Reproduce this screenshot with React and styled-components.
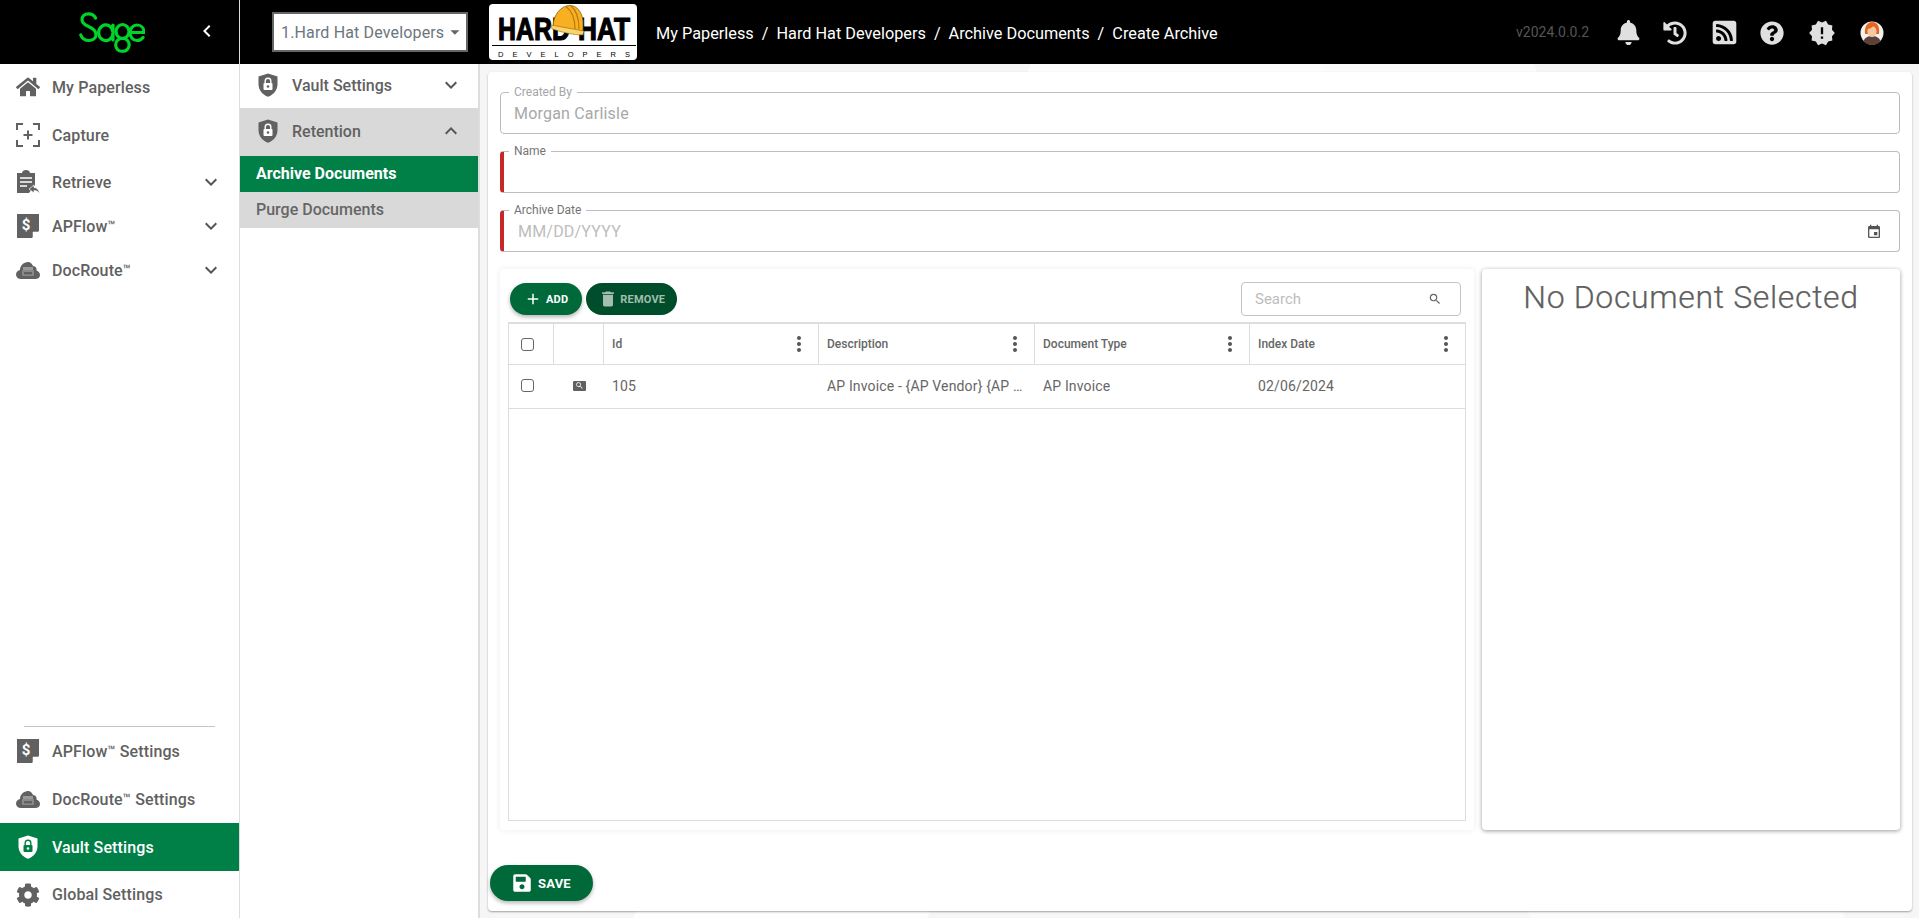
import React from 'react';
import styled, { createGlobalStyle } from 'styled-components';
import { FaBell, FaHistory, FaRssSquare, FaQuestionCircle, FaHome, FaCog, FaSave } from 'react-icons/fa';
import { MdNewReleases, MdAdd, MdDelete, MdEvent, MdSearch, MdMoreVert, MdKeyboardArrowDown, MdKeyboardArrowUp, MdKeyboardArrowLeft, MdArrowDropDown } from 'react-icons/md';

const GlobalStyle = createGlobalStyle`
  html, body {
    margin: 0;
    height: 100%;
    overflow: hidden;
    font-family: Roboto, 'Liberation Sans', sans-serif;
  }
  * { box-sizing: border-box; }
`;

const Page = styled.div`
  width: 1919px;
  height: 918px;
  display: flex;
  flex-direction: column;
  background: #fff;
`;

const Header = styled.header`
  height: 64px;
  flex: none;
  background: #000;
  display: flex;
  align-items: center;
`;

const Brand = styled.div`
  width: 240px;
  height: 100%;
  flex: none;
  border-right: 1px solid #ddd;
  display: flex;
  align-items: center;
  padding-left: 79px;
  color: #fff;
  svg.back { margin-left: 50px; margin-top: -3px; }
`;

const CompanySelect = styled.div`
  width: 196px;
  height: 40px;
  margin-left: 32px;
  flex: none;
  background: #fff;
  border: 2px solid #666;
  display: flex;
  align-items: center;
  justify-content: space-between;
  padding: 0 0 0 7px;
  color: #6c757d;
  font-size: 16px;
  letter-spacing: 0.15px;
  white-space: nowrap;
`;

const LogoBox = styled.div`
  width: 148px;
  height: 56px;
  margin-left: 21px;
  flex: none;
  background: #fff;
  border-radius: 4px;
  line-height: 0;
`;

const Breadcrumb = styled.nav`
  margin-left: 19px;
  margin-top: 2px;
  color: #fff;
  font-size: 16.3px;
  display: flex;
  gap: 8px;
  white-space: nowrap;
`;

const Version = styled.span`
  margin-left: auto;
  margin-right: 15px;
  color: #555;
  font-size: 14px;
`;

const HeaderIcons = styled.div`
  display: grid;
  grid-template-columns: 48px 46px 52px 44px 56px 44px;
  justify-items: center;
  align-items: center;
  margin-right: 25px;
  margin-top: 1px;
  color: #e0e0e0;
`;

const Body = styled.div`
  flex: 1;
  display: flex;
  min-height: 0;
`;

const Sidebar = styled.aside`
  width: 240px;
  flex: none;
  border-right: 1px solid #ddd;
  display: flex;
  flex-direction: column;
  justify-content: space-between;
`;

const Divider = styled.div`
  height: 1px;
  background: #c4c4c4;
  margin: 0 24px 0 24px;
`;

const NavRow = styled.div`
  height: ${(p) => p.$h || 48}px;
  display: flex;
  align-items: center;
  padding: 0 16px;
  gap: 12px;
  font-size: 16px;
  font-weight: 500;
  letter-spacing: 0.12px;
  color: ${(p) => (p.$active ? '#fff' : '#616161')};
  background: ${(p) => (p.$active ? '#008047' : 'transparent')};
  sup { font-size: 13px; line-height: 0; vertical-align: 2px; }
`;

const NavIcon = styled.span`
  width: 24px;
  height: 24px;
  flex: none;
  display: flex;
  align-items: center;
  justify-content: center;
`;

const Chevron = styled.span`
  margin-left: auto;
  margin-right: 0;
  display: flex;
  color: #555;
`;

const SubNav = styled.aside`
  width: 240px;
  flex: none;
  border-right: 2px solid #ddd;
`;

const SubRow = styled.div`
  height: ${(p) => p.$h}px;
  display: flex;
  align-items: center;
  padding: 0 15px 2px 18px;
  gap: 14px;
  font-size: 16px;
  font-weight: 500;
  color: #616161;
  background: ${(p) => (p.$open ? '#d9d9d9' : '#fff')};
`;

const SubItem = styled.div`
  height: 36px;
  display: flex;
  align-items: center;
  padding: 0 0 2px 16px;
  font-size: 16px;
  font-weight: ${(p) => (p.$active ? 700 : 500)};
  color: ${(p) => (p.$active ? '#fff' : '#666')};
  background: ${(p) => (p.$active ? '#008047' : '#d9d9d9')};
`;

const Main = styled.main`
  flex: 1;
  min-width: 0;
  padding: 8px 7px 7px 8px;
  background:
    linear-gradient(115deg, transparent 30%, #fdfdfd 30%, #fdfdfd 46%, transparent 46%),
    linear-gradient(70deg, transparent 60%, #fbfbfb 60%, #fbfbfb 78%, transparent 78%),
    #f6f6f6;
`;

const Card = styled.div`
  height: 100%;
  background: #fff;
  border-radius: 4px;
  box-shadow: 0 1px 2px rgba(0, 0, 0, 0.35);
  padding: 13px 12px 10px;
  display: flex;
  flex-direction: column;
`;

const Field = styled.fieldset`
  margin: 0 0 10px;
  padding: 5px 17px 0 ${(p) => (p.$required ? 10 : 13)}px;
  height: 49px;
  min-width: 0;
  border: 1px solid #bdbdbd;
  border-left: ${(p) => (p.$required ? '4px solid #c62828' : '1px solid #bdbdbd')};
  border-radius: 4px;
  display: flex;
  align-items: flex-start;
  justify-content: space-between;
  legend {
    font-size: 12px;
    line-height: 14px;
    padding: 0 5px;
    margin-left: -5px;
    color: ${(p) => (p.$muted ? '#a6a6a6' : '#757575')};
  }
  > svg { margin-top: 2px; }
`;

const FieldValue = styled.span`
  font-size: 16px;
  letter-spacing: 0.2px;
  margin-left: ${(p) => p.$indent || 0}px;
  color: ${(p) => (p.$hint ? '#bdbdbd' : '#a8a8a8')};
`;

const Panels = styled.div`
  flex: 1;
  min-height: 0;
  display: flex;
  gap: 8px;
  margin-top: 7px;
`;

const TablePanel = styled.section`
  flex: 1;
  min-width: 0;
  background: #fff;
  border-radius: 4px;
  box-shadow: 0 0 6px rgba(0, 0, 0, 0.08);
  padding: 13px 8px 9px;
  display: flex;
  flex-direction: column;
`;

const Toolbar = styled.div`
  height: 34px;
  flex: none;
  margin-bottom: 6px;
  display: flex;
  align-items: center;
  gap: 4px;
  padding: 0 5px 0 2px;
`;

const PillButton = styled.button`
  height: ${(p) => p.$h || 32}px;
  border: none;
  border-radius: 18px;
  display: inline-flex;
  align-items: center;
  justify-content: center;
  gap: ${(p) => p.$gap || 4}px;
  padding: 0 ${(p) => p.$pad || 14}px;
  font-family: inherit;
  font-size: ${(p) => p.$size || 11}px;
  font-weight: 700;
  color: ${(p) => (p.$disabled ? '#a3bdae' : '#fff')};
  background: ${(p) => (p.$disabled ? '#004d2b' : '#00693a')};
  box-shadow: ${(p) => (p.$disabled ? 'none' : '0 2px 4px rgba(0,0,0,.3)')};
  letter-spacing: 0.2px;
`;

const SearchBox = styled.div`
  width: 220px;
  height: 34px;
  margin-left: auto;
  border: 1px solid #c4c4c4;
  border-radius: 4px;
  display: flex;
  align-items: center;
  justify-content: space-between;
  padding: 0 18px 0 13px;
  font-size: 15px;
  color: #bdbdbd;
  svg { color: #666; }
`;

const Table = styled.div`
  flex: 1;
  min-height: 0;
  border: 1px solid #ddd;
  border-top-width: 2px;
`;

const TableRow = styled.div`
  display: grid;
  grid-template-columns: 45px 50px 215px 216px 215px 1fr;
  height: ${(p) => p.$h}px;
  border-bottom: 1px solid #ddd;
`;

const HeadCell = styled.div`
  display: flex;
  align-items: center;
  justify-content: space-between;
  padding: 0 7px 0 8px;
  font-size: 12px;
  font-weight: 500;
  color: #666;
  border-right: ${(p) => (p.$last ? 'none' : '1px solid #ddd')};
  svg { color: #555; }
`;

const Cell = styled.div`
  display: flex;
  align-items: center;
  padding: 0 ${(p) => (p.$center ? 0 : 10)}px 2px ${(p) => (p.$center ? 0 : 8)}px;
  justify-content: ${(p) => (p.$center ? 'center' : 'flex-start')};
  font-size: 14px;
  letter-spacing: 0.15px;
  color: #666;
  min-width: 0;
  span {
    overflow: hidden;
    white-space: nowrap;
    text-overflow: ellipsis;
  }
`;

const CheckCell = styled.div`
  display: flex;
  align-items: center;
  padding-left: 12px;
  padding-bottom: ${(p) => (p.$line ? 0 : 2)}px;
  border-right: ${(p) => (p.$line ? '1px solid #ddd' : 'none')};
`;

const Check = styled.input.attrs({ type: 'checkbox' })`
  appearance: none;
  margin: 0;
  width: 13px;
  height: 13px;
  border: 1px solid #666;
  border-radius: 3px;
  background: #fff;
`;

const PreviewIcon = styled.span`
  width: 13px;
  height: 10px;
  background: #616161;
  border-radius: 1px;
  display: flex;
  align-items: center;
  justify-content: center;
  color: #fff;
`;

const PreviewPanel = styled.section`
  width: 418px;
  flex: none;
  background: #fff;
  border-radius: 4px;
  box-shadow: 0 1px 4px rgba(0, 0, 0, 0.4);
  text-align: center;
  font-size: 32px;
  font-weight: 300;
  letter-spacing: 0.65px;
  -webkit-text-stroke: 0.25px #5f5f5f;
  color: #5f5f5f;
  padding-top: 9px;
`;

const Footer = styled.div`
  flex: none;
  margin: 35px 0 0 -10px;
`;

const ShieldIcon = ({ color = '#616161', lock = '#fff' }) => (
  <svg width="20" height="24" viewBox="0 0 20 24">
    <path d="M10 0.5 L19.5 3.5 V11 C19.5 17 15.5 21.8 10 23.8 C4.5 21.8 0.5 17 0.5 11 V3.5 Z" fill={color} />
    <path d="M7.2 10 V8 a2.8 2.8 0 0 1 5.6 0 V10" fill="none" stroke={lock} strokeWidth="1.4" />
    <rect x="5.5" y="10" width="9" height="7" rx="1" fill={lock} />
    <circle cx="10" cy="13.5" r="1.3" fill={color} />
  </svg>
);

const CaptureIcon = () => (
  <svg width="24" height="24" viewBox="0 0 24 24" fill="none" stroke="#616161" strokeWidth="2">
    <path d="M1 7 V1 H7 M17 1 H23 V7 M1 17 V23 H7 M17 23 H23 V17 M12 7.5 V16.5 M7.5 12 H16.5" />
  </svg>
);

const RetrieveIcon = () => (
  <svg width="24" height="24" viewBox="0 0 24 24">
    <path d="M1 3 H6 C6 1 8 0 10 0 C12 0 14 1 14 3 H19 V15 L13 23 H1 Z" fill="#616161" />
    <path d="M4 8 H16 M4 12 H16 M4 16 H11" stroke="#fff" strokeWidth="1.6" />
    <path d="M13 19 L18 15 V17.5 C21 17.5 23 20 23.5 23.5 C22 21.5 20.5 20.5 18 20.5 V23 Z" fill="#616161" stroke="#fff" strokeWidth="0.7" />
  </svg>
);

const FlowIcon = () => (
  <svg width="24" height="24" viewBox="0 0 24 24">
    <path d="M1 0 H23 V17 L16 24 H1 Z" fill="#616161" />
    <path d="M17 18 H23 L17 24 Z" fill="#fff" stroke="#fff" strokeWidth="0.5" />
    <text x="10" y="16" fontFamily="Roboto, sans-serif" fontWeight="700" fontSize="15" fill="#fff" textAnchor="middle">$</text>
  </svg>
);

const CloudIcon = () => (
  <svg width="24" height="18" viewBox="0 0 24 18">
    <path d="M5 18 C2 18 0 16 0 13.5 C0 11 2 9.5 4 9 C4 5 7 2 10 1.5 C13 0 16 2 17 5 C20 5 21 8 20.5 9.5 C22.5 10 24 12 24 14 C24 16.5 22 18 19 18 Z" fill="#616161" />
    <rect x="7" y="6" width="10" height="3" fill="#9a9a9a" />
    <rect x="6" y="9" width="12" height="6" rx="1" fill="#8a8a8a" />
    <rect x="8" y="11" width="8" height="2.4" fill="#616161" />
  </svg>
);

const SageLogo = () => (
  <svg width="66" height="41" viewBox="0 0 66 41" fill="none" stroke="#00d32a" strokeWidth="3.2" strokeLinecap="round" role="img" aria-label="Sage logo">
    <path d="M16.5 6 C15 3 12.5 1.8 9.5 1.8 C5.5 1.8 3 4 3 7.5 C3 11.5 6 13 9.5 14.5 C13.5 16.2 17 18 17 22.5 C17 26.5 13.5 28.5 10 28.5 C6 28.5 3 26.5 1.8 23" />
    <path d="M34 20.5 A7.2 7.8 0 1 0 34 21 M34 13 V28" />
    <path d="M43.5 12.5 A6.5 7 0 1 0 43.5 26.5 A6 6.4 0 1 1 43.3 39.2 A6 6.4 0 1 1 43.5 26.5 A6.5 7 0 1 0 43.5 12.5 Z" />
    <path d="M51 20.5 H65 C65 16 62 13 58 13 C54 13 51 16.5 51 20.5 C51 25 54 28.5 58 28.5 C60.5 28.5 62.5 27.5 64 25.5" />
  </svg>
);

const HardHatLogo = () => (
  <svg width="148" height="56" viewBox="0 0 148 56" role="img" aria-label="Hard Hat Developers logo">
    <text x="9" y="36" fontFamily="'Liberation Sans', sans-serif" fontWeight="700" fontSize="31" stroke="#000" strokeWidth="1.2" textLength="72" lengthAdjust="spacingAndGlyphs">HARD</text>
    <text x="89" y="36" fontFamily="'Liberation Sans', sans-serif" fontWeight="700" fontSize="31" stroke="#000" strokeWidth="1.2" textLength="52" lengthAdjust="spacingAndGlyphs">HAT</text>
    <path d="M64 23 C64 11 72 1.5 81 1.5 C88 1.5 93 8 94 17 L94 27 C85 28 74 27 64 23 Z" fill="#f8b022" stroke="#7a5208" strokeWidth="0.7" />
    <path d="M77 2.5 C83 7 86 15 86 25 M82 2 C88 7 90 15 90 25" stroke="#b97a0c" strokeWidth="1.2" fill="none" />
    <path d="M62 21 L95 27 L94 31 C84 31 72 28 63 25 Z" fill="#fbd36a" stroke="#7a5208" strokeWidth="0.5" />
    <rect x="3" y="41" width="144" height="1" fill="#000" />
    <text x="9" y="53" fontFamily="'Liberation Sans', sans-serif" fontSize="7.5" fill="#000" textLength="132" lengthAdjust="spacing">DEVELOPERS</text>
  </svg>
);

const Avatar = () => (
  <svg width="24" height="24" viewBox="0 0 24 24">
    <circle cx="12" cy="12" r="11.5" fill="#f1f1f1" />
    <path d="M3.5 20 C5 16 9 15 12 15 C15 15 19 16 20.5 20 A11 11 0 0 1 3.5 20 Z" fill="#5d4037" />
    <path d="M5 13 C4 5 8 1 12 1 C17 1 20 5 19 13 L16 13 L8 13 Z" fill="#e8651c" />
    <ellipse cx="12" cy="10.5" rx="4.5" ry="5.5" fill="#f4c7a6" />
    <path d="M7 8 C9 8 12 7 14 4 C15 6 16 7 17 8 L16 4 L10 3 Z" fill="#e8651c" />
  </svg>
);

const Down = () => <Chevron><MdKeyboardArrowDown size={24} /></Chevron>;

export default function App() {
  return (
    <Page>
      <GlobalStyle />
      <Header>
        <Brand>
          <SageLogo />
          <MdKeyboardArrowLeft className="back" size={24} />
        </Brand>
        <CompanySelect>
          1.Hard Hat Developers
          <MdArrowDropDown size={26} color="#666" />
        </CompanySelect>
        <LogoBox><HardHatLogo /></LogoBox>
        <Breadcrumb>
          <span>My Paperless</span><span>/</span>
          <span>Hard Hat Developers</span><span>/</span>
          <span>Archive Documents</span><span>/</span>
          <span>Create Archive</span>
        </Breadcrumb>
        <Version>v2024.0.0.2</Version>
        <HeaderIcons>
          <FaBell size={25} />
          <FaHistory size={24} />
          <FaRssSquare size={27} />
          <FaQuestionCircle size={24} />
          <MdNewReleases size={28} />
          <Avatar />
        </HeaderIcons>
      </Header>
      <Body>
        <Sidebar>
          <div>
            <NavRow $h={46}><NavIcon><FaHome size={24} color="#616161" /></NavIcon>My Paperless</NavRow>
            <NavRow $h={50}><NavIcon><CaptureIcon /></NavIcon>Capture</NavRow>
            <NavRow $h={44}><NavIcon><RetrieveIcon /></NavIcon>Retrieve<Down /></NavRow>
            <NavRow $h={44}><NavIcon><FlowIcon /></NavIcon><span>APFlow<sup>™</sup></span><Down /></NavRow>
            <NavRow $h={44}><NavIcon><CloudIcon /></NavIcon><span>DocRoute<sup>™</sup></span><Down /></NavRow>
          </div>
          <div>
            <Divider />
            <NavRow><NavIcon><FlowIcon /></NavIcon><span>APFlow<sup>™</sup> Settings</span></NavRow>
            <NavRow><NavIcon><CloudIcon /></NavIcon><span>DocRoute<sup>™</sup> Settings</span></NavRow>
            <NavRow $active><NavIcon><ShieldIcon color="#fff" lock="#008047" /></NavIcon>Vault Settings</NavRow>
            <NavRow $h={47}><NavIcon><FaCog size={24} color="#616161" /></NavIcon>Global Settings</NavRow>
          </div>
        </Sidebar>
        <SubNav>
          <SubRow $h={44}><ShieldIcon />Vault Settings<Chevron><MdKeyboardArrowDown size={24} /></Chevron></SubRow>
          <SubRow $h={48} $open><ShieldIcon />Retention<Chevron><MdKeyboardArrowUp size={24} /></Chevron></SubRow>
          <SubItem $active>Archive Documents</SubItem>
          <SubItem>Purge Documents</SubItem>
        </SubNav>
        <Main>
          <Card>
            <Field $muted>
              <legend>Created By</legend>
              <FieldValue>Morgan Carlisle</FieldValue>
            </Field>
            <Field $required>
              <legend>Name</legend>
            </Field>
            <Field $required>
              <legend>Archive Date</legend>
              <FieldValue $hint $indent={4}>MM/DD/YYYY</FieldValue>
              <MdEvent size={16} color="#555" />
            </Field>
            <Panels>
              <TablePanel>
                <Toolbar>
                  <PillButton><MdAdd size={18} />ADD</PillButton>
                  <PillButton $disabled $pad={12} $gap={2}><MdDelete size={20} />REMOVE</PillButton>
                  <SearchBox>Search<MdSearch size={14} /></SearchBox>
                </Toolbar>
                <Table>
                  <TableRow $h={41}>
                    <CheckCell $line><Check /></CheckCell>
                    <HeadCell />
                    <HeadCell>Id<MdMoreVert size={24} /></HeadCell>
                    <HeadCell>Description<MdMoreVert size={24} /></HeadCell>
                    <HeadCell>Document Type<MdMoreVert size={24} /></HeadCell>
                    <HeadCell $last>Index Date<MdMoreVert size={24} /></HeadCell>
                  </TableRow>
                  <TableRow $h={44}>
                    <CheckCell><Check /></CheckCell>
                    <Cell $center><PreviewIcon><MdSearch size={9} /></PreviewIcon></Cell>
                    <Cell><span>105</span></Cell>
                    <Cell><span>AP Invoice - {'{AP Vendor}'} {'{AP Invoice Number}'}</span></Cell>
                    <Cell><span>AP Invoice</span></Cell>
                    <Cell><span>02/06/2024</span></Cell>
                  </TableRow>
                </Table>
              </TablePanel>
              <PreviewPanel>No Document Selected</PreviewPanel>
            </Panels>
            <Footer>
              <PillButton $h={36} $pad={22} $size={13} $gap={6}><FaSave size={20} />SAVE</PillButton>
            </Footer>
          </Card>
        </Main>
      </Body>
    </Page>
  );
}
